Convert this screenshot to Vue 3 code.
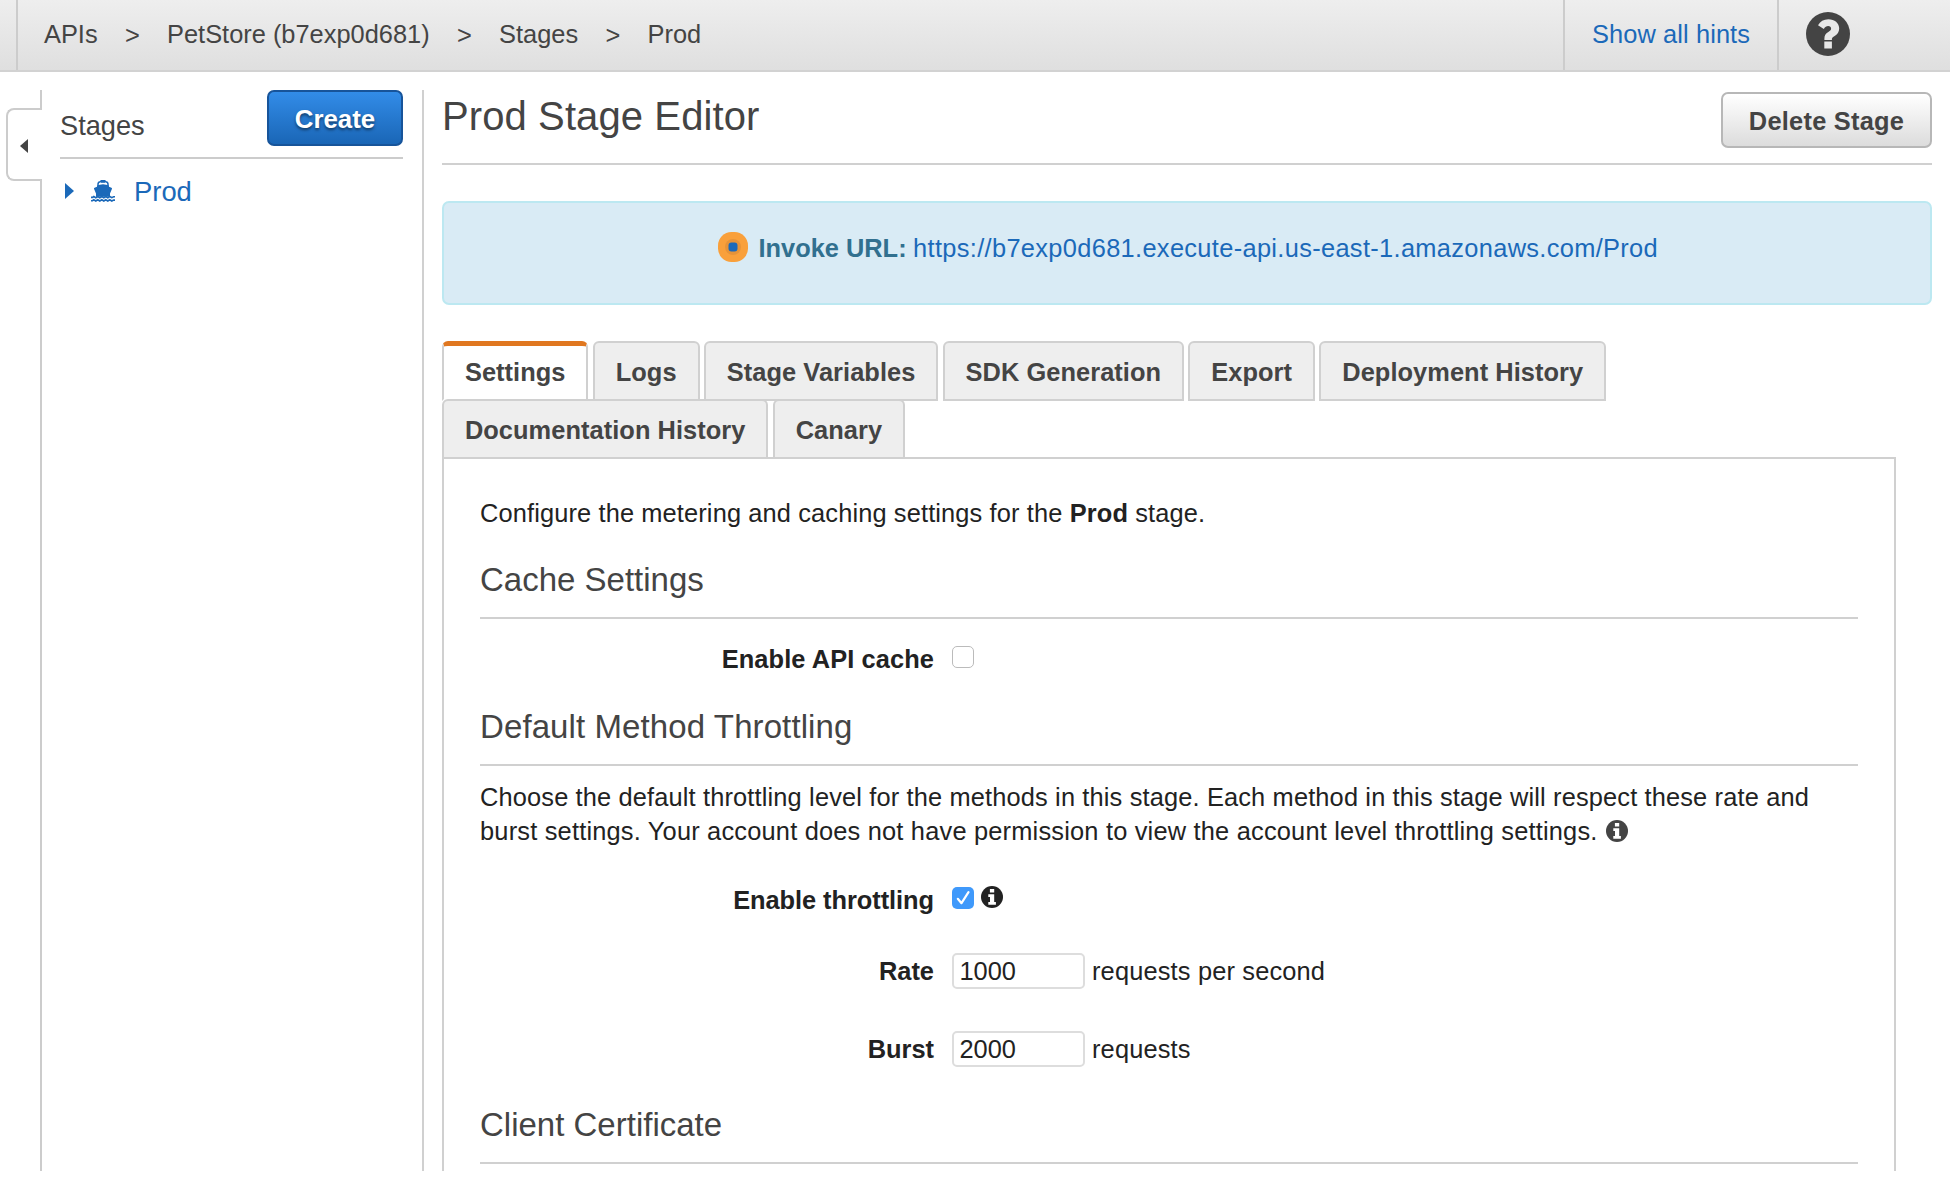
<script setup>
import { ref } from 'vue'

const crumbs = ['APIs', 'PetStore (b7exp0d681)', 'Stages', 'Prod']
const tabs = [
  'Settings',
  'Logs',
  'Stage Variables',
  'SDK Generation',
  'Export',
  'Deployment History',
  'Documentation History',
  'Canary',
]
const active = ref('Settings')
const rate = ref('1000')
const burst = ref('2000')
</script>

<template>
  <div class="page">
    <header class="topbar">
      <nav class="crumbs">
        <template v-for="(c, i) in crumbs" :key="c">
          <span v-if="i" class="sep">&gt;</span>
          <span>{{ c }}</span>
        </template>
      </nav>
      <a class="hints">Show all hints</a>
      <div class="help">
        <svg width="44" height="44" viewBox="0 0 44 44">
          <circle cx="22" cy="22" r="22" fill="#444" />
          <path d="M12 13.300C14.200 9.300 17.600 7.200 22.400 7.200c6.200 0 10.800 3.900 10.800 9.100 0 3.800-1.700 5.900-4.900 8-1.900 1.300-2.400 1.800-2.400 3.100v.5h-7.500v-1.500c0-3 1.100-4.600 3.900-6.400 2.200-1.400 2.800-2.100 2.800-3.400 0-1.500-1.100-2.500-2.900-2.500-1.900 0-3 .8-4.400 3z" fill="#e8e8e8" />
          <rect x="18.300" y="29.500" width="7.600" height="7" fill="#e8e8e8" />
        </svg>
      </div>
    </header>

    <div class="body">
      <aside class="rail">
        <div class="rail-top"></div>
        <div class="handle">
          <svg width="8" height="14" viewBox="0 0 8 14"><path d="M8 0v14L0 7z" fill="#444" /></svg>
        </div>
        <div class="rail-rest"></div>
      </aside>

      <aside class="sidebar">
        <div class="side-head">
          <span class="side-title">Stages</span>
          <button class="btn primary">Create</button>
        </div>
        <div class="tree">
          <svg class="caret" width="9" height="16" viewBox="0 0 9 16"><path d="M0 0l9 8-9 8z" fill="#1b69b9" /></svg>
          <svg class="ship" width="24" height="22" viewBox="0 0 24 22">
            <path d="M7 5.500V4.200C7 2.700 8 2 9.300 1.800L10.500.5h3l1.200 1.300C16 2 17 2.700 17 4.200v1.300" fill="none" stroke="#1b69b9" stroke-width="1.500" />
            <path d="M10 .3h4v2.500h-4z" fill="#1b69b9" />
            <path d="M6 5.200l6-.9 6 .9v1.500l2.400 1c.6.200.8.600.5 1.200L19 13.500v3.200H5v-3.200L3.100 8.900c-.3-.6-.1-1 .5-1.200l2.400-1z" fill="#1b69b9" />
            <path d="M0 17.400h1.500l1.300-.9 2 1.200 2-1.200 2 1.200 2-1.200 2 1.200 2-1.200 2 1.200 2-1.200 2 1.200 1.800-.9H24M0 20.700h1.500l1.300-.9 2 1.200 2-1.200 2 1.200 2-1.200 2 1.200 2-1.200 2 1.200 2-1.200 2 1.200 1.800-.9H24" fill="none" stroke="#1b69b9" stroke-width="1.600" />
          </svg>
          <a class="tree-link">Prod</a>
        </div>
      </aside>

      <main class="main">
        <div class="title-row">
          <h1>Prod Stage Editor</h1>
          <button class="btn plain">Delete Stage</button>
        </div>

        <div class="invoke">
          <svg width="30" height="30" viewBox="0 0 30 30">
            <rect width="30" height="30" rx="13.500" fill="#f9a03b" />
            <circle cx="15" cy="15" r="8" fill="#e69339" />
            <rect x="10.500" y="10.500" width="9" height="9" rx="3" fill="#1b69b9" />
          </svg>
          <b>Invoke URL:</b>
          <a>https://b7exp0d681.execute-api.us-east-1.amazonaws.com/Prod</a>
        </div>

        <div class="tabs">
          <div v-for="t in tabs" :key="t" class="tab" :class="{ active: t === active }">{{ t }}</div>
        </div>

        <section class="panel">
          <p class="intro">Configure the metering and caching settings for the <b>Prod</b> stage.</p>

          <h2 class="h-cache">Cache Settings</h2>
          <div class="row row-cache">
            <label>Enable API cache</label>
            <span class="check"></span>
          </div>

          <h2 class="h-throttle">Default Method Throttling</h2>
          <p class="desc">
            Choose the default throttling level for the methods in this stage. Each method in this stage will respect these rate and<br />
            <span class="desc-end">burst settings. Your account does not have permission to view the account level throttling settings.</span>
            <svg class="info" width="22" height="22" viewBox="0 0 22 22">
              <circle cx="11" cy="11" r="11" fill="#444" />
              <path d="M8.900 2.900h4.300v3.500H8.900zM7.300 8.300h5.900v7.800h1.700v2.600H7.300v-2.600H9v-5.200H7.300z" fill="#fff" />
            </svg>
          </p>
          <div class="row row-throttle">
            <label>Enable throttling</label>
            <span class="check on">
              <svg width="22" height="22" viewBox="0 0 22 22"><path d="M5.800 11.800l3.700 4.400 7-11" fill="none" stroke="#fff" stroke-width="2.200" stroke-linecap="round" stroke-linejoin="round" /></svg>
            </span>
            <svg class="info-inline" width="22" height="22" viewBox="0 0 22 22">
              <circle cx="11" cy="11" r="11" fill="#222" />
              <path d="M8.900 2.900h4.300v3.500H8.900zM7.300 8.300h5.900v7.800h1.700v2.600H7.300v-2.600H9v-5.200H7.300z" fill="#fff" />
            </svg>
          </div>
          <div class="row row-rate">
            <label>Rate</label>
            <input v-model="rate" type="text" />
            <span class="unit">requests per second</span>
          </div>
          <div class="row row-burst">
            <label>Burst</label>
            <input v-model="burst" type="text" />
            <span class="unit">requests</span>
          </div>

          <h2 class="h-cert">Client Certificate</h2>
        </section>
      </main>
    </div>
  </div>
</template>

<style>
body {
  margin: 0;
  background: #fff;
  overflow: hidden;
}
</style>

<style scoped>
.page {
  box-sizing: border-box;
  width: 1950px;
  height: 1181px;
  background: #fff;
  font-family: 'Liberation Sans', Arial, sans-serif;
  font-size: 25.4px;
  line-height: 34px;
  color: #222;
  overflow: hidden;
}
.page * {
  box-sizing: border-box;
}
svg {
  display: block;
  flex: none;
}
.topbar {
  display: flex;
  height: 72px;
  border-bottom: 2px solid #d2d2d2;
  background: linear-gradient(#eee, #dfdfdf);
  color: #444;
  line-height: 69px;
}
.crumbs {
  display: flex;
  flex: 1;
  margin-left: 16px;
  padding-left: 26px;
  border-left: 2px solid #ccc;
  white-space: nowrap;
}
.sep {
  padding: 1px 27.300px 0 27.300px;
}
.hints {
  width: 214px;
  padding-left: 27px;
  border-left: 2px solid #ccc;
  color: #1b69b9;
  letter-spacing: 0.1px;
}
.help {
  width: 173px;
  padding: 12px 0 0 27px;
  border-left: 2px solid #ccc;
}
.body {
  display: flex;
  height: 1099px;
  padding-top: 18px;
  overflow: hidden;
}
.rail {
  display: flex;
  flex-direction: column;
  width: 36px;
  margin-left: 6px;
}
.rail-top {
  height: 18px;
  border-right: 2px solid #ccc;
}
.handle {
  display: flex;
  align-items: center;
  height: 73px;
  padding: 2px 0 0 12px;
  border: 2px solid #ccc;
  border-right: 0;
  border-radius: 8px 0 0 8px;
}
.rail-rest {
  flex: 1;
  margin-top: -1px;
  border-right: 2px solid #ccc;
}
.sidebar {
  width: 382px;
  padding: 0 19px 0 18px;
  border-right: 2px solid #d0d0d0;
}
.side-head {
  display: flex;
  justify-content: space-between;
  height: 69px;
  border-bottom: 2px solid #ccc;
}
.side-title {
  padding-top: 19px;
  font-size: 27.2px;
  color: #444;
}
.btn {
  height: 56px;
  padding: 2px 0 0;
  border-radius: 7px;
  font: bold 25.4px/50px 'Liberation Sans', Arial, sans-serif;
  text-align: center;
  white-space: nowrap;
}
.primary {
  width: 136px;
  border: 2px solid #17549a;
  background: linear-gradient(#328ce8, #1a66b6);
  color: #fff;
  font-size: 25.8px;
  text-shadow: 0 2px 3px rgba(0, 0, 0, 0.5);
}
.plain {
  width: 211px;
  margin-top: 2px;
  border: 2px solid #b7b7b7;
  background: linear-gradient(#fff, #dcdcdc);
  color: #444;
  letter-spacing: 0.25px;
}
.tree {
  display: flex;
  align-items: center;
  height: 34px;
  margin-top: 16px;
  padding-left: 5px;
  color: #1b69b9;
}
.caret,
.ship {
  margin-bottom: 2px;
}
.ship {
  margin-left: 17px;
}
.tree-link {
  margin-left: 19px;
  font-size: 27.4px;
}
.main {
  width: 1490px;
  margin-left: 18px;
}
.title-row {
  display: flex;
  justify-content: space-between;
  height: 74.500px;
  border-bottom: 2px solid #d0d0d0;
}
h1 {
  margin: 0;
  font-weight: normal;
  font-size: 40px;
  line-height: 53px;
  color: #444;
  letter-spacing: 0.1px;
}
.invoke {
  display: flex;
  justify-content: center;
  height: 104px;
  margin-top: 36.500px;
  padding: 29px 0 0 2px;
  border: 2px solid #bce8f1;
  border-radius: 7px;
  background: #d9ebf5;
  line-height: 33px;
  white-space: nowrap;
}
.invoke b {
  margin: 0 6.500px 0 10.500px;
  color: #31708f;
}
.invoke a {
  color: #1b69b9;
  letter-spacing: 0.33px;
}
.tabs {
  display: flex;
  flex-wrap: wrap;
  gap: 0 4.400px;
  width: 1454px;
  margin-top: 36px;
}
.tab {
  height: 60px;
  margin-bottom: -2px;
  padding: 0 20.900px;
  border: 2px solid #d0d0d0;
  border-radius: 6px 6px 0 0;
  background: #eee;
  color: #444;
  font-weight: bold;
  line-height: 58px;
  letter-spacing: 0.06px;
  white-space: nowrap;
}
.tab.active {
  border-top: 5px solid #e07720;
  border-bottom-color: #fff;
  background: #fff;
  line-height: 52px;
}
.panel {
  width: 1454px;
  height: 730px;
  padding: 37px 36px 0;
  border: 2px solid #d0d0d0;
}
p,
h2 {
  margin: 0;
}
.intro {
  letter-spacing: 0.13px;
  white-space: nowrap;
}
h2 {
  height: 59px;
  border-bottom: 2px solid #d0d0d0;
  font-weight: normal;
  font-size: 33px;
  line-height: 40px;
  color: #444;
}
.h-cache {
  margin-top: 30px;
}
.h-throttle {
  margin-top: 31px;
  letter-spacing: 0.1px;
}
.h-cert {
  margin-top: 38px;
}
.desc {
  margin-top: 13.500px;
  line-height: 34.500px;
  letter-spacing: 0.148px;
  white-space: nowrap;
}
.desc-end {
  letter-spacing: 0.195px;
}
.info {
  display: inline-block;
  margin-left: 8px;
  vertical-align: -2px;
}
.row {
  display: flex;
  height: 34px;
}
.row label {
  width: 454px;
  margin-right: 18px;
  font-weight: bold;
  text-align: right;
  white-space: nowrap;
}
.row-cache {
  margin-top: 23px;
}
.row-cache label {
  letter-spacing: 0.1px;
}
.row-throttle {
  margin-top: 34.500px;
}
.row-throttle label {
  letter-spacing: -0.05px;
}
.row-rate,
.row-burst {
  height: 36px;
  line-height: 36px;
}
.row-rate {
  margin-top: 36px;
}
.row-burst {
  margin-top: 42px;
}
.check {
  flex: none;
  width: 22px;
  height: 22px;
  margin-top: 4px;
  border: 1.500px solid #bbb;
  border-radius: 5px;
  background: #fff;
}
.check.on {
  border: 0;
  background: #3f99fb;
}
.info-inline {
  margin: 3px 0 0 7px;
}
input {
  width: 133px;
  height: 36px;
  padding: 0 5.500px;
  border: 2px solid #ddd;
  border-radius: 5px;
  background: #fff;
  color: #222;
  font: 25.4px 'Liberation Sans', Arial, sans-serif;
  outline: none;
}
.unit {
  margin-left: 7px;
  letter-spacing: 0.16px;
  white-space: nowrap;
}
</style>
